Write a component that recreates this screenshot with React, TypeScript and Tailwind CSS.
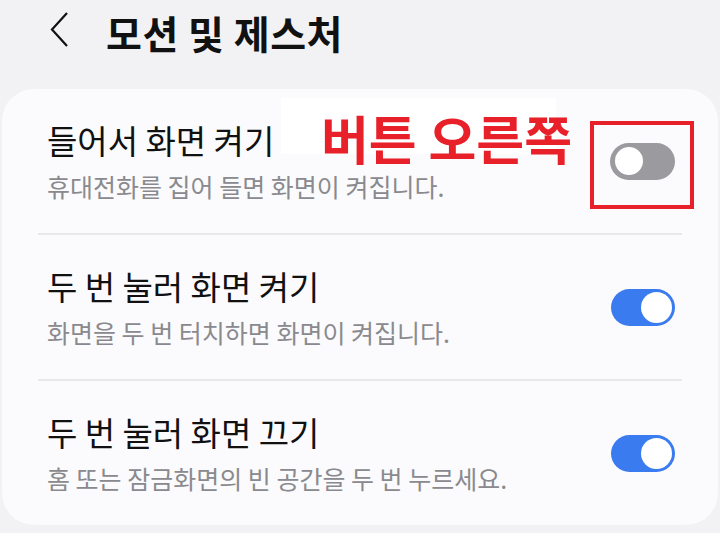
import React from 'react';

const KR = { fontFamily: '"Noto Sans CJK KR", "Noto Sans", sans-serif' };

type Item = { title: string; desc: string; on: boolean };

const items: Item[] = [
  { title: '들어서 화면 켜기', desc: '휴대전화를 집어 들면 화면이 켜집니다.', on: false },
  { title: '두 번 눌러 화면 켜기', desc: '화면을 두 번 터치하면 화면이 켜집니다.', on: true },
  { title: '두 번 눌러 화면 끄기', desc: '홈 또는 잠금화면의 빈 공간을 두 번 누르세요.', on: true },
];

function Toggle({ on }: { on: boolean }) {
  if (on) {
    return (
      <div className="w-[64px] h-[37px] rounded-full bg-[#3b7bf0] flex items-center justify-end pr-[3px] shrink-0">
        <div className="w-[31px] h-[31px] rounded-full bg-white" />
      </div>
    );
  }
  return (
    <div className="w-[65px] h-[37px] rounded-full bg-[#9b9b9f] flex items-center justify-start pl-[2px] shrink-0">
      <div className="w-[34px] h-[34px] rounded-full bg-white border-[3px] border-[#9b9b9f]" />
    </div>
  );
}

export default function App() {
  return (
    <div className="w-[720px] h-[533px] bg-[#f2f2f4] overflow-hidden px-[2px]" style={KR}>
      {/* header */}
      <div className="h-[89px] flex items-start pl-[46px] pt-[13px]">
        <svg width="22" height="36" viewBox="0 0 22 36" className="shrink-0 -mt-[1px]">
          <path d="M19 1 L4 17.5 L19 34" fill="none" stroke="#111" strokeWidth="2.2" />
        </svg>
        <h1 className="ml-[36px] text-[39px] leading-none font-bold text-[#111] tracking-[0.5px]">모션 및 제스처</h1>
      </div>

      {/* card */}
      <div className="relative bg-[#fbfbfd] rounded-[32px]">
        {items.map((it, i) => (
          <div key={i}>
            {i > 0 && <div className="mx-[36px] h-[2px] bg-[#e8e8ea]" />}
            <div className="flex items-center justify-between pl-[45px] pr-[43px] pt-[31px] pb-[31px]">
              <div>
                <div className="text-[33px] leading-[40px] text-[#111]">{it.title}</div>
                <div className="mt-[10px] text-[25px] leading-[32px] text-[#8a8a8e]">{it.desc}</div>
              </div>
              <Toggle on={it.on} />
            </div>
          </div>
        ))}

        {/* annotation */}
        <div className="absolute left-[279px] top-[9px] w-[275px] h-[56px] bg-white" />
        <div className="absolute left-[319px] top-[23px] text-[52px] leading-none font-bold text-[#e8202a] whitespace-nowrap">
          버튼 오른쪽
        </div>
        <div className="absolute left-[588px] top-[32px] w-[104px] h-[88px] border-[4px] border-[#e8202a]" />
      </div>
    </div>
  );
}
